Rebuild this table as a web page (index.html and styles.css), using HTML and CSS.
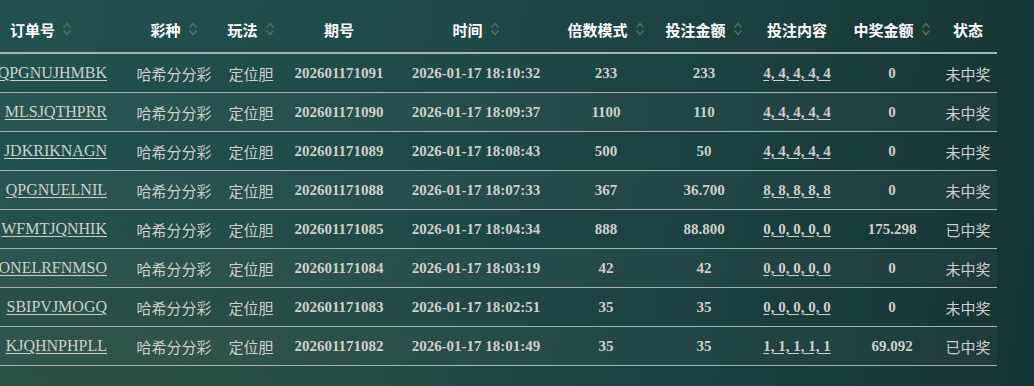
FILE: index.html
```html
<!DOCTYPE html>
<html lang="zh-CN">
<head>
<meta charset="utf-8">
<title>投注记录</title>
<link rel="stylesheet" href="styles.css">
</head>
<body>
<div class="page">
  <table class="records">
    <colgroup>
      <col class="c-order"><col class="c-lottery"><col class="c-play"><col class="c-issue"><col class="c-time">
      <col class="c-mult"><col class="c-amount"><col class="c-content"><col class="c-win"><col class="c-status">
    </colgroup>
    <thead>
      <tr>
        <th class="th-left"><span class="th">订单号<svg class="sort" viewBox="0 0 10 16"><path d="M1.5 6.5 5 2.5 8.5 6.5M1.5 9.5 5 13.5 8.5 9.5"/></svg></span></th>
        <th><span class="th">彩种<svg class="sort" viewBox="0 0 10 16"><path d="M1.5 6.5 5 2.5 8.5 6.5M1.5 9.5 5 13.5 8.5 9.5"/></svg></span></th>
        <th><span class="th">玩法<svg class="sort" viewBox="0 0 10 16"><path d="M1.5 6.5 5 2.5 8.5 6.5M1.5 9.5 5 13.5 8.5 9.5"/></svg></span></th>
        <th><span class="th">期号</span></th>
        <th><span class="th">时间<svg class="sort" viewBox="0 0 10 16"><path d="M1.5 6.5 5 2.5 8.5 6.5M1.5 9.5 5 13.5 8.5 9.5"/></svg></span></th>
        <th><span class="th">倍数模式<svg class="sort" viewBox="0 0 10 16"><path d="M1.5 6.5 5 2.5 8.5 6.5M1.5 9.5 5 13.5 8.5 9.5"/></svg></span></th>
        <th><span class="th">投注金额<svg class="sort" viewBox="0 0 10 16"><path d="M1.5 6.5 5 2.5 8.5 6.5M1.5 9.5 5 13.5 8.5 9.5"/></svg></span></th>
        <th><span class="th">投注内容</span></th>
        <th><span class="th">中奖金额<svg class="sort" viewBox="0 0 10 16"><path d="M1.5 6.5 5 2.5 8.5 6.5M1.5 9.5 5 13.5 8.5 9.5"/></svg></span></th>
        <th><span class="th">状态</span></th>
      </tr>
    </thead>
    <tbody>
      <tr><td class="order"><div class="order-in"><a>QPGNUJHMBK</a></div></td><td class="cn">哈希分分彩</td><td class="cn">定位胆</td><td>202601171091</td><td>2026-01-17 18:10:32</td><td>233</td><td>233</td><td><a>4, 4, 4, 4, 4</a></td><td>0</td><td class="cn">未中奖</td></tr>
      <tr><td class="order"><div class="order-in"><a>MLSJQTHPRR</a></div></td><td class="cn">哈希分分彩</td><td class="cn">定位胆</td><td>202601171090</td><td>2026-01-17 18:09:37</td><td>1100</td><td>110</td><td><a>4, 4, 4, 4, 4</a></td><td>0</td><td class="cn">未中奖</td></tr>
      <tr><td class="order"><div class="order-in"><a>JDKRIKNAGN</a></div></td><td class="cn">哈希分分彩</td><td class="cn">定位胆</td><td>202601171089</td><td>2026-01-17 18:08:43</td><td>500</td><td>50</td><td><a>4, 4, 4, 4, 4</a></td><td>0</td><td class="cn">未中奖</td></tr>
      <tr><td class="order"><div class="order-in"><a>QPGNUELNIL</a></div></td><td class="cn">哈希分分彩</td><td class="cn">定位胆</td><td>202601171088</td><td>2026-01-17 18:07:33</td><td>367</td><td>36.700</td><td><a>8, 8, 8, 8, 8</a></td><td>0</td><td class="cn">未中奖</td></tr>
      <tr><td class="order"><div class="order-in"><a>WFMTJQNHIK</a></div></td><td class="cn">哈希分分彩</td><td class="cn">定位胆</td><td>202601171085</td><td>2026-01-17 18:04:34</td><td>888</td><td>88.800</td><td><a>0, 0, 0, 0, 0</a></td><td>175.298</td><td class="cn">已中奖</td></tr>
      <tr><td class="order"><div class="order-in"><a>ONELRFNMSO</a></div></td><td class="cn">哈希分分彩</td><td class="cn">定位胆</td><td>202601171084</td><td>2026-01-17 18:03:19</td><td>42</td><td>42</td><td><a>0, 0, 0, 0, 0</a></td><td>0</td><td class="cn">未中奖</td></tr>
      <tr><td class="order"><div class="order-in"><a>SBIPVJMOGQ</a></div></td><td class="cn">哈希分分彩</td><td class="cn">定位胆</td><td>202601171083</td><td>2026-01-17 18:02:51</td><td>35</td><td>35</td><td><a>0, 0, 0, 0, 0</a></td><td>0</td><td class="cn">未中奖</td></tr>
      <tr><td class="order"><div class="order-in"><a>KJQHNPHPLL</a></div></td><td class="cn">哈希分分彩</td><td class="cn">定位胆</td><td>202601171082</td><td>2026-01-17 18:01:49</td><td>35</td><td>35</td><td><a>1, 1, 1, 1, 1</a></td><td>69.092</td><td class="cn">已中奖</td></tr>
    </tbody>
  </table>
</div>
</body>
</html>
```

FILE: styles.css
```css
html, body {
  margin: 0;
  height: 100%;
}
body {
  background:
    radial-gradient(ellipse 520px 260px at 120px 420px, rgba(60, 80, 58, 0.5), rgba(60, 80, 58, 0) 100%),
    linear-gradient(100deg, #22514e 0%, #1f4a48 40%, #1b403f 70%, #163433 100%);
  overflow: hidden;
}
.page {
  width: 1034px;
  height: 386px;
}
.records {
  width: 997px;
  table-layout: fixed;
  border-collapse: collapse;
  font-family: "Liberation Serif", "Noto Sans CJK SC", serif;
  font-size: 15px;
  color: #cdd0cb;
}
.c-order { width: 125px; }
.c-lottery { width: 98px; }
.c-play { width: 56px; }
.c-issue { width: 120px; }
.c-time { width: 154px; }
.c-mult { width: 106px; }
.c-amount { width: 90px; }
.c-content { width: 96px; }
.c-win { width: 94px; }
.c-status { width: 58px; }

thead th {
  height: 46px;
  padding: 6px 0 0;
  border-bottom: 2px solid #a9b3af;
  font-family: "Noto Sans CJK SC", sans-serif;
  font-weight: bold;
  font-size: 15px;
  color: #ffffff;
  text-align: center;
  white-space: nowrap;
}
thead th.th-left {
  text-align: left;
  padding-left: 10px;
}
.th {
  display: inline-flex;
  align-items: center;
  gap: 7px;
}
.sort {
  width: 10px;
  height: 16px;
  fill: none;
  stroke: #56735f;
  stroke-width: 1.2;
}
tbody td {
  height: 38px;
  padding: 0;
  border-bottom: 1px solid #a9b3af;
  text-align: center;
  font-weight: bold;
  white-space: nowrap;
  overflow: hidden;
}
tbody tr:nth-child(even) td {
  background: rgba(255, 255, 255, 0.03);
}
tbody td.cn {
  font-family: "Noto Sans CJK SC", sans-serif;
  font-weight: normal;
}
tbody td.order {
  padding-right: 18px;
  font-weight: normal;
  font-size: 16px;
}
.order-in {
  display: flex;
  justify-content: flex-end;
}
a {
  color: inherit;
  text-decoration: underline;
  text-underline-offset: 2px;
}
```
